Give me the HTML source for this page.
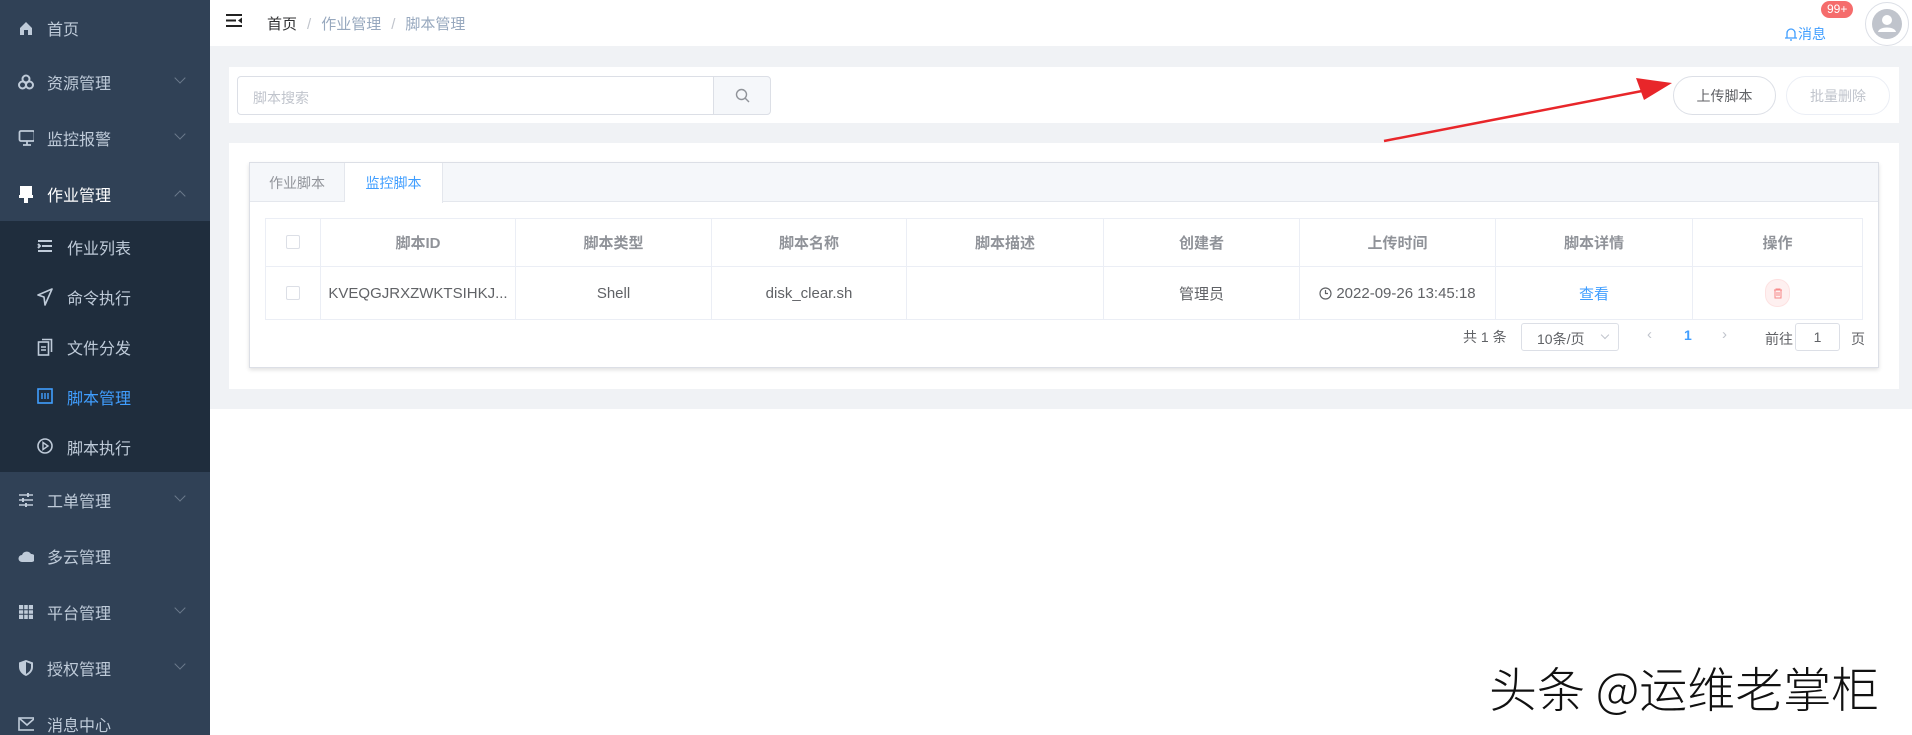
<!DOCTYPE html>
<html style="overflow:hidden;width:1912px;height:735px"><head><meta charset="utf-8"><style>
*{box-sizing:border-box;margin:0;padding:0}
body{width:1912px;height:735px;overflow:hidden;font-family:"Liberation Sans","Noto Sans CJK SC",sans-serif;background:#f0f2f5;position:relative;color:#606266}
.side{position:absolute;left:0;top:0;width:210px;height:735px;background:#304156}
.it{position:absolute;left:0;width:210px;height:56px;display:flex;align-items:center;color:#bfcbd9;font-size:16px}
.it .ic{position:absolute;left:18px;width:16px;height:16px;display:flex;align-items:center;justify-content:center}
.it .tx{position:absolute;left:47px}
.it .ar{position:absolute;left:176px;top:20px;width:8px;height:8px;border-right:1.5px solid #6b7a8c;border-bottom:1.5px solid #6b7a8c;transform:rotate(45deg)}
.sub{position:absolute;left:0;top:221px;width:210px;height:251px;background:#1f2d3d}
.si{position:absolute;left:0;width:210px;height:50px;color:#bfcbd9;font-size:16px}
.si .ic{position:absolute;left:37px;top:17px;width:16px;height:16px}
.si .tx{position:absolute;left:67px;top:14px}
.abs{position:absolute}
.hdr{position:absolute;left:210px;top:0;width:1702px;height:46px;background:#fff}
.panel{position:absolute;background:#fff}
.th,.td{position:absolute;display:flex;align-items:center;justify-content:center;font-size:15px;border-right:1px solid #ebeef5}
.th{color:#909399;font-weight:bold;height:48px;top:218px}
.td{color:#606266;height:54px;top:266px}
.cb{width:14px;height:14px;border:1px solid #dcdfe6;border-radius:2px;background:#fff}
</style></head><body>
<div class="side">
 <div class="it" style="top:0"><div class="ic"><svg width="16" height="16"><path d="M2 8L8 2L14 8V15H10V10H6V15H2Z" fill="#bfcbd9"/></svg></div><span class="tx">首页</span></div>
 <div class="it" style="top:54px"><div class="ic"><svg width="16" height="16"><circle cx="8" cy="5" r="3.5" fill="none" stroke="#bfcbd9" stroke-width="2"/><circle cx="4.5" cy="11" r="3.5" fill="none" stroke="#bfcbd9" stroke-width="2"/><circle cx="11.5" cy="11" r="3.5" fill="none" stroke="#bfcbd9" stroke-width="2"/></svg></div><span class="tx">资源管理</span><div class="ar"></div></div>
 <div class="it" style="top:110px"><div class="ic"><svg width="18" height="18"><rect x="1.5" y="2" width="15" height="10" rx="1.5" fill="none" stroke="#bfcbd9" stroke-width="1.8"/><path d="M9 12V16M5 16H13" stroke="#bfcbd9" stroke-width="1.8"/></svg></div><span class="tx">监控报警</span><div class="ar"></div></div>
 <div class="it" style="top:166px;color:#fff"><div class="ic"><svg width="16" height="18"><rect x="2" y="1" width="12" height="9" fill="#fff"/><rect x="1" y="10" width="14" height="3" fill="#fff"/><rect x="6" y="13" width="4" height="5" fill="#fff"/></svg></div><span class="tx">作业管理</span><div class="ar" style="transform:rotate(-135deg);top:26px"></div></div>
 <div class="sub">
  <div class="si" style="top:0"><div class="ic"><svg width="16" height="16"><path d="M1 3H15M5 8H15M1 13H15M1 6L3 8L1 10" stroke="#bfcbd9" stroke-width="2" fill="none"/></svg></div><span class="tx">作业列表</span></div>
  <div class="si" style="top:50px"><div class="ic"><svg width="16" height="18"><path d="M15 1L1 7L7 9L8 17Z" fill="none" stroke="#bfcbd9" stroke-width="1.6" stroke-linejoin="round"/></svg></div><span class="tx">命令执行</span></div>
  <div class="si" style="top:100px"><div class="ic"><svg width="16" height="18"><rect x="1.5" y="4" width="10" height="13" fill="none" stroke="#bfcbd9" stroke-width="1.6"/><path d="M5 1.5H14.5V14M4 9H9M4 12H9" stroke="#bfcbd9" stroke-width="1.6" fill="none"/></svg></div><span class="tx">文件分发</span></div>
  <div class="si" style="top:150px;color:#409eff"><div class="ic"><svg width="16" height="16"><rect x="1" y="1" width="14" height="14" fill="none" stroke="#409eff" stroke-width="1.6"/><path d="M5 5V11M8 5V11M11 5V11" stroke="#409eff" stroke-width="1.4"/></svg></div><span class="tx">脚本管理</span></div>
  <div class="si" style="top:200px"><div class="ic"><svg width="16" height="16"><circle cx="8" cy="8" r="7" fill="none" stroke="#bfcbd9" stroke-width="1.6"/><path d="M6 4.5L11 8L6 11.5Z" fill="none" stroke="#bfcbd9" stroke-width="1.4"/></svg></div><span class="tx">脚本执行</span></div>
 </div>
 <div class="it" style="top:472px"><div class="ic"><svg width="16" height="16"><path d="M1 3H15M1 8H15M1 13H15" stroke="#bfcbd9" stroke-width="1.6"/><path d="M10 1V5M5 6V10M8 11V15" stroke="#bfcbd9" stroke-width="2"/></svg></div><span class="tx">工单管理</span><div class="ar"></div></div>
 <div class="it" style="top:528px"><div class="ic"><svg width="18" height="14"><path d="M4 13A3.5 3.5 0 0 1 4 6A5 5 0 0 1 13 5A4 4 0 0 1 14 13Z" fill="#bfcbd9"/></svg></div><span class="tx">多云管理</span></div>
 <div class="it" style="top:584px"><div class="ic"><svg width="16" height="16"><path d="M1 1H15V15H1Z" fill="#bfcbd9"/><path d="M1 5.7H15M1 10.3H15M5.7 1V15M10.3 1V15" stroke="#304156" stroke-width="1"/></svg></div><span class="tx">平台管理</span><div class="ar"></div></div>
 <div class="it" style="top:640px"><div class="ic"><svg width="16" height="18"><path d="M8 1L15 3.5V8C15 12.5 11.5 15.5 8 17C4.5 15.5 1 12.5 1 8V3.5Z" fill="#bfcbd9"/><path d="M8 3L13 5V8C13 11.5 10.5 13.5 8 15Z" fill="#304156"/></svg></div><span class="tx">授权管理</span><div class="ar"></div></div>
 <div class="it" style="top:696px"><div class="ic"><svg width="18" height="14"><rect x="1" y="1" width="16" height="12" fill="none" stroke="#bfcbd9" stroke-width="1.6"/><path d="M1 1L9 8L17 1" fill="none" stroke="#bfcbd9" stroke-width="1.6"/></svg></div><span class="tx">消息中心</span></div>
</div>

<div class="hdr"></div>
<svg class="abs" style="left:226px;top:14px" width="17" height="14"><path d="M0 1H16M0 6.5H10M0 12H16" stroke="#222" stroke-width="2"/><path d="M16 3.5L12 6.5L16 9.5Z" fill="#222"/></svg>
<div class="abs" style="left:267px;top:13px;font-size:15px;color:#303133">首页<span style="color:#c0c4cc;margin:0 10px">/</span><span style="color:#97a8be">作业管理</span><span style="color:#c0c4cc;margin:0 10px">/</span><span style="color:#97a8be">脚本管理</span></div>
<div class="abs" style="left:1784px;top:24px;font-size:14px;color:#409eff;display:flex;align-items:center"><svg width="14" height="15"><path d="M3 11V6A4 4 0 0 1 11 6V11H13H1Z" fill="none" stroke="#409eff" stroke-width="1.3"/><path d="M6 13H8" stroke="#409eff" stroke-width="1.3"/></svg>消息</div>
<div class="abs" style="left:1821px;top:1px;background:#f56c6c;color:#fff;font-size:12px;border-radius:9px;padding:1px 6px;height:17px;line-height:15px">99+</div>
<div class="abs" style="left:1865px;top:2px;width:44px;height:44px;border-radius:50%;border:1px solid #dcdfe6;background:#fff;display:flex;align-items:center;justify-content:center"><svg width="32" height="32"><circle cx="16" cy="16" r="15" fill="#c0c4cc"/><circle cx="16" cy="12" r="5" fill="#fff"/><path d="M7 24C8 18 24 18 25 24Z" fill="#fff"/></svg></div>

<div class="panel" style="left:229px;top:67px;width:1670px;height:56px"></div>
<div class="abs" style="left:237px;top:76px;width:477px;height:39px;border:1px solid #dcdfe6;border-radius:4px 0 0 4px;background:#fff;font-size:14px;color:#c0c4cc;padding:11px 15px">脚本搜索</div>
<div class="abs" style="left:713px;top:76px;width:58px;height:39px;border:1px solid #dcdfe6;border-radius:0 4px 4px 0;background:#f5f7fa;display:flex;align-items:center;justify-content:center"><svg width="15" height="15"><circle cx="6.5" cy="6.5" r="5" fill="none" stroke="#909399" stroke-width="1.4"/><path d="M10 10L14 14" stroke="#909399" stroke-width="1.4"/></svg></div>
<div class="abs" style="left:1673px;top:76px;width:103px;height:39px;border:1px solid #dcdfe6;border-radius:20px;background:#fff;font-size:14px;color:#606266;display:flex;align-items:center;justify-content:center">上传脚本</div>
<div class="abs" style="left:1786px;top:76px;width:104px;height:39px;border:1px solid #ebeef5;border-radius:20px;background:#fff;font-size:14px;color:#c0c4cc;display:flex;align-items:center;justify-content:center">批量删除</div>

<div class="panel" style="left:229px;top:143px;width:1670px;height:246px"></div>
<div class="abs" style="left:249px;top:162px;width:1630px;height:206px;border:1px solid #dcdfe6;background:#fff;box-shadow:0 2px 4px rgba(0,0,0,.12)"></div>
<div class="abs" style="left:250px;top:163px;width:1628px;height:39px;background:#f5f7fa;border-bottom:1px solid #e4e7ed"></div>
<div class="abs" style="left:250px;top:163px;width:95px;height:39px;font-size:14px;color:#909399;display:flex;align-items:center;justify-content:center;border-right:1px solid #e4e7ed">作业脚本</div>
<div class="abs" style="left:345px;top:163px;width:98px;height:40px;background:#fff;font-size:14px;color:#409eff;display:flex;align-items:center;justify-content:center;border-right:1px solid #e4e7ed">监控脚本</div>

<div class="abs" style="left:265px;top:218px;width:1598px;height:102px;border:1px solid #ebeef5;border-right:none"></div>
<div class="abs" style="left:265px;top:266px;width:1598px;height:1px;background:#ebeef5"></div>
<div class="th" style="left:265px;width:56px"><div class="cb"></div></div>
<div class="th" style="left:321px;width:195px">脚本ID</div>
<div class="th" style="left:516px;width:196px">脚本类型</div>
<div class="th" style="left:712px;width:195px">脚本名称</div>
<div class="th" style="left:907px;width:197px">脚本描述</div>
<div class="th" style="left:1104px;width:196px">创建者</div>
<div class="th" style="left:1300px;width:196px">上传时间</div>
<div class="th" style="left:1496px;width:197px">脚本详情</div>
<div class="th" style="left:1693px;width:170px">操作</div>
<div class="td" style="left:265px;width:56px"><div class="cb"></div></div>
<div class="td" style="left:321px;width:195px">KVEQGJRXZWKTSIHKJ...</div>
<div class="td" style="left:516px;width:196px">Shell</div>
<div class="td" style="left:712px;width:195px">disk_clear.sh</div>
<div class="td" style="left:907px;width:197px"></div>
<div class="td" style="left:1104px;width:196px">管理员</div>
<div class="td" style="left:1300px;width:196px"><svg width="13" height="13" style="margin-right:4px"><circle cx="6.5" cy="6.5" r="5.5" fill="none" stroke="#606266" stroke-width="1.2"/><path d="M6.5 3V6.5H9" fill="none" stroke="#606266" stroke-width="1.2"/></svg>2022-09-26 13:45:18</div>
<div class="td" style="left:1496px;width:197px;color:#409eff">查看</div>
<div class="td" style="left:1693px;width:170px"><div style="width:25px;height:28px;border-radius:12px;background:#fef0f0;border:1px solid #fde2e2;display:flex;align-items:center;justify-content:center"><svg width="10" height="11"><path d="M1 2H9M3 2V1H7V2M2 2V10H8V2M4 4V8M6 4V8" fill="none" stroke="#f78989" stroke-width="1"/></svg></div></div>

<div class="abs" style="left:1463px;top:327px;font-size:14px;color:#606266">共 1 条</div>
<div class="abs" style="left:1521px;top:323px;width:98px;height:28px;border:1px solid #dcdfe6;border-radius:3px;font-size:14px;padding:5px 15px;color:#606266">10条/页<span style="position:absolute;right:10px;top:8px;width:6px;height:6px;border-right:1px solid #c0c4cc;border-bottom:1px solid #c0c4cc;transform:rotate(45deg)"></span></div>
<div class="abs" style="left:1647px;top:326px;font-size:15px;color:#c0c4cc">‹</div>
<div class="abs" style="left:1684px;top:327px;font-size:14px;color:#409eff;font-weight:bold">1</div>
<div class="abs" style="left:1722px;top:326px;font-size:15px;color:#c0c4cc">›</div>
<div class="abs" style="left:1765px;top:329px;font-size:14px">前往</div>
<div class="abs" style="left:1795px;top:323px;width:45px;height:28px;border:1px solid #dcdfe6;border-radius:3px;font-size:14px;text-align:center;line-height:26px">1</div>
<div class="abs" style="left:1851px;top:329px;font-size:14px">页</div>

<div class="abs" style="left:210px;top:409px;width:1702px;height:326px;background:#fff"></div>

<svg class="abs" style="left:0;top:0" width="1912" height="735"><path d="M1384 141L1642 91" stroke="#e8262a" stroke-width="2.5"/><path d="M1672 83L1636 78L1644 100Z" fill="#e8262a"/></svg>
<div class="abs" style="left:1489px;top:660px;font-size:48px;font-weight:300;color:#111;white-space:nowrap;font-family:'Noto Sans CJK SC',sans-serif;line-height:52px;height:52px">头条 @运维老掌柜</div>
</body></html>
